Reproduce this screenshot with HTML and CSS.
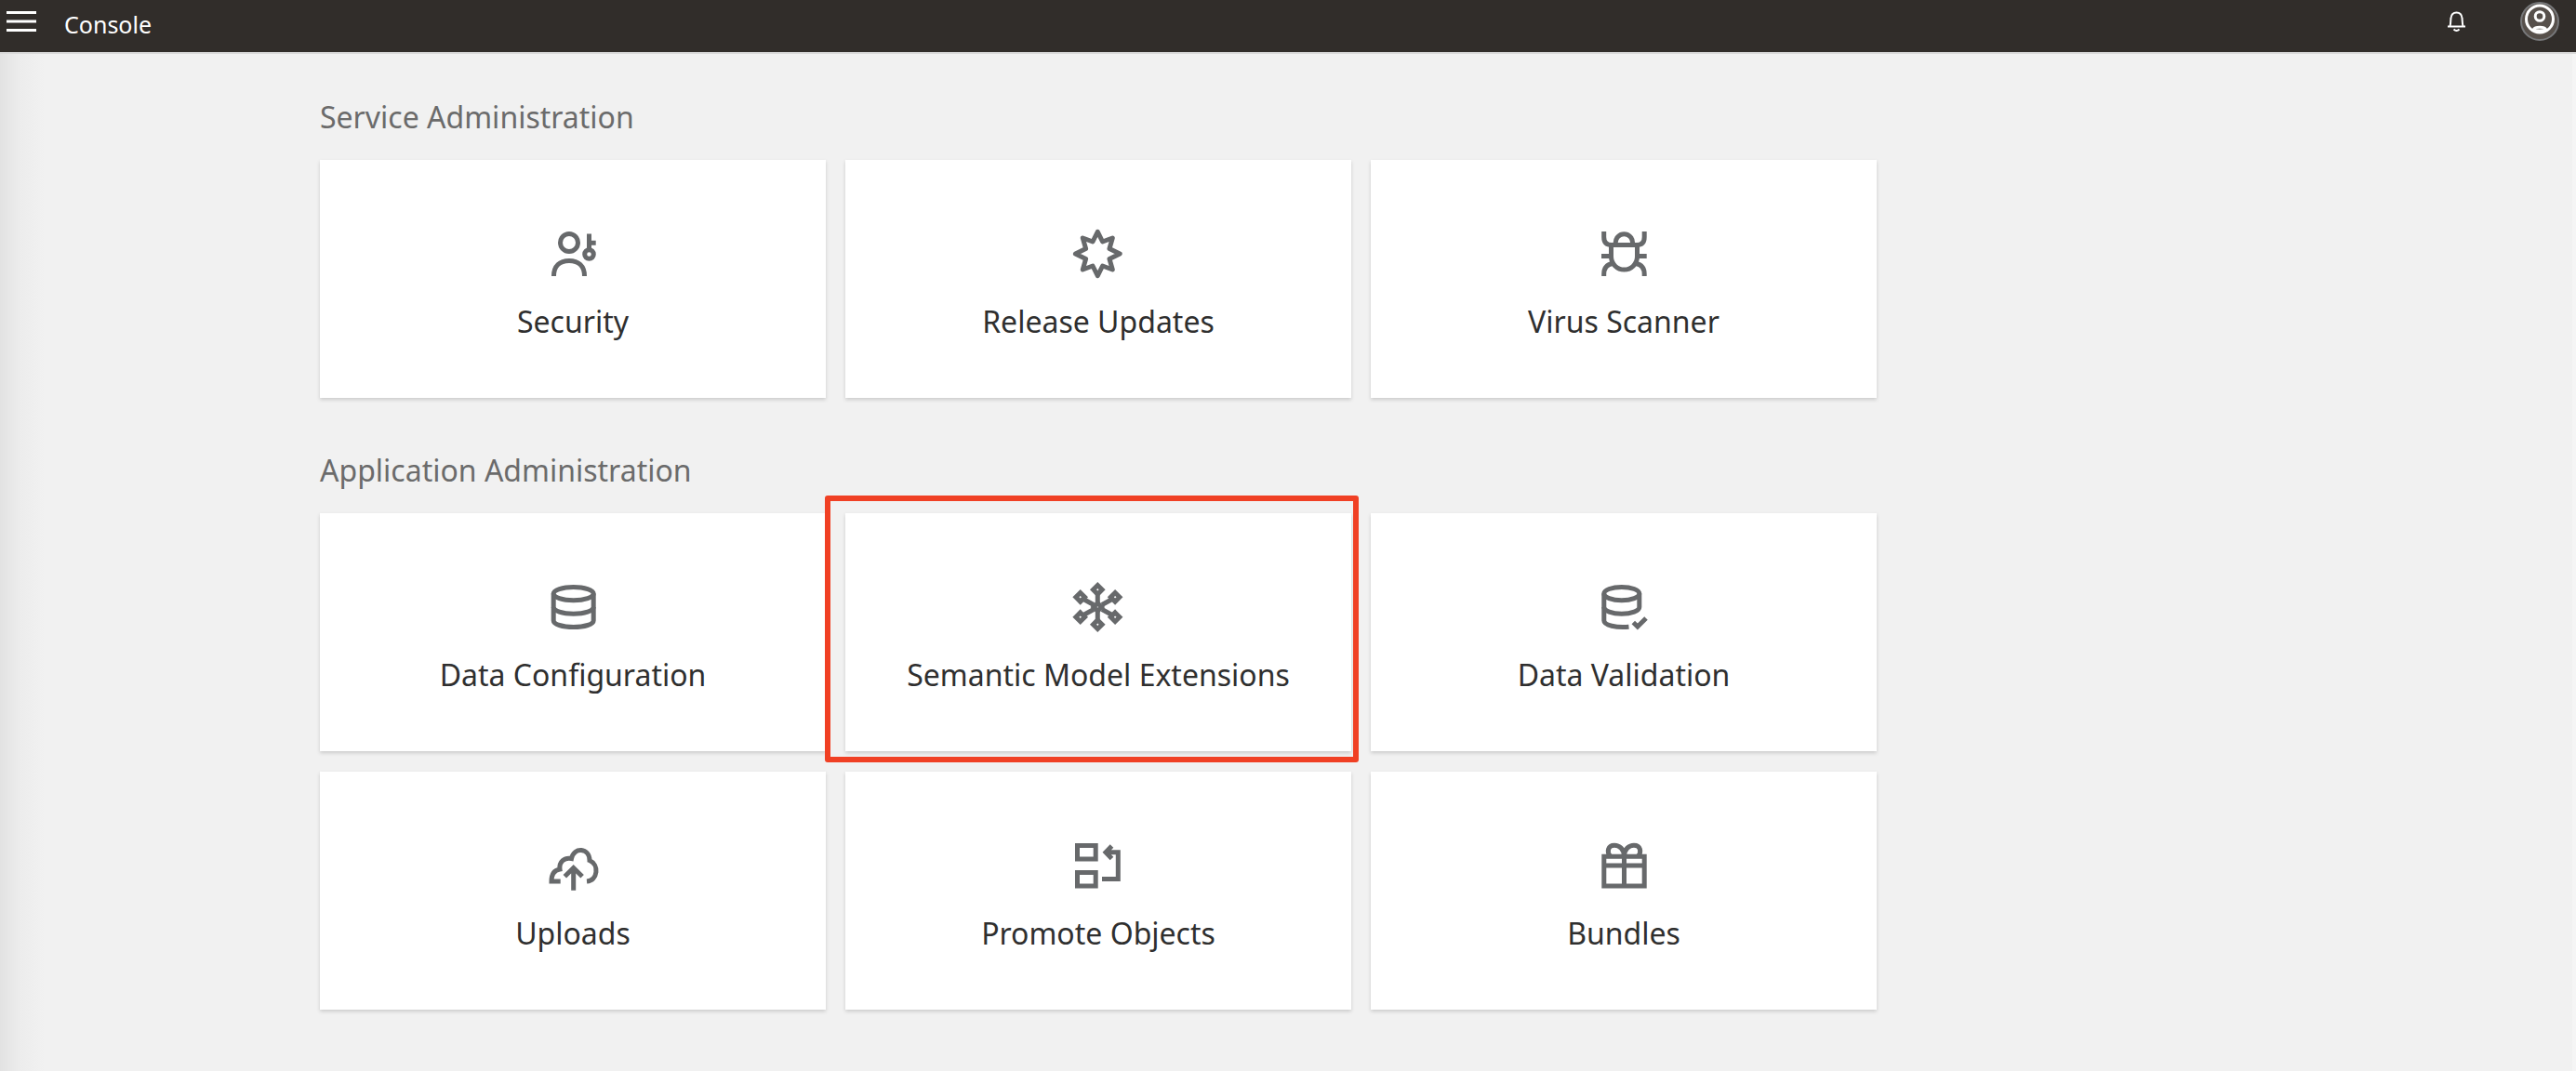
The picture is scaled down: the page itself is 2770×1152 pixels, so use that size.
FILE: index.html
```html
<!DOCTYPE html>
<html lang="en">
<head>
  <meta charset="UTF-8">
  <title>Console</title>
  <meta name="viewport" content="width=device-width, initial-scale=1.0">
  <link rel="stylesheet" href="styles.css">
</head>
<body>
  <header class="topbar">
    <button class="icon-button" type="button" aria-label="Navigation menu">
      <svg class="menu-icon" viewBox="0 0 32 24"><path d="M0 2.5H32M0 12H32M0 21.5H32"/></svg>
    </button>
    <span class="topbar-title">Console</span>
    <button class="icon-button push-right" type="button" aria-label="Notifications">
      <svg class="bell-icon" viewBox="0 0 24 24"><path d="M2 17.5H21M4.5 17C5.5 14 5 12 5.500 8.500C6 4 8.500 2.500 11.500 2.500S17 4 17.500 8.500C18 12 17.500 14 18.500 17M8.500 20.500Q11.500 23.500 14.500 20.500"/></svg>
    </button>
    <button class="icon-button" type="button" aria-label="My profile">
      <svg class="avatar-icon" viewBox="0 0 42 42">
        <circle class="avatar-back" cx="21" cy="21" r="20"/>
        <circle cx="21" cy="18.500" r="14.500"/>
        <circle cx="21" cy="15.500" r="4.800"/>
        <path d="M14.500 29.500C16 26.500 26 26.500 27.500 29.500C25 31.500 17 31.500 14.500 29.500Z"/>
      </svg>
    </button>
  </header>

  <main class="page">
    <section class="group">
      <h2>Service Administration</h2>
      <div class="cards">
        <a class="card" href="#security">
          <svg viewBox="0 0 60 60">
            <circle cx="26" cy="17" r="9.500"/>
            <path d="M9.500 53C9.500 42 16 36.500 26 36.500S42.500 42 42.500 53"/>
            <circle cx="47.500" cy="29.500" r="4.800"/>
            <path d="M47.500 25V7.500M47.500 17.300H54.700"/>
          </svg>
          <span>Security</span>
        </a>
        <a class="card" href="#release-updates">
          <svg class="rounded" viewBox="0 0 60 60">
            <path d="M29.300 5.300L34.600 16L45.300 12L42 23.500L53.200 29L42 34.500L45.300 46L34.600 42L29.300 52.700L24 42L13.300 46L16.600 34.500L5.400 29L16.600 23.500L13.300 12L24 16Z"/>
          </svg>
          <span>Release Updates</span>
        </a>
        <a class="card" href="#virus-scanner">
          <svg viewBox="0 0 60 60">
            <path d="M16.500 19.500H44.500V32A14 14 0 0 1 16.500 32Z"/>
            <path d="M21.200 19V17A9.200 9.200 0 0 1 39.600 17V19"/>
            <path d="M8.700 5V11Q8.700 19.500 17 19.500M52.200 5V11Q52.200 19.500 44 19.500"/>
            <path d="M6 31.500H16M45 31.500H54.700"/>
            <path d="M8.700 53V51Q8.700 41 18 39.500M52.200 53V51Q52.200 41 43 39.500"/>
          </svg>
          <span>Virus Scanner</span>
        </a>
      </div>
    </section>

    <section class="group">
      <h2>Application Administration</h2>
      <div class="cards">
        <a class="card" href="#data-configuration">
          <svg viewBox="0 0 60 60">
            <ellipse cx="30.700" cy="14.600" rx="21.500" ry="7.200"/>
            <path d="M9.200 14.600V43.500C9.200 47.500 18.800 50.500 30.700 50.500S52.200 47.500 52.200 43.500V14.600"/>
            <path d="M9.200 29C9.200 33 18.800 36.200 30.700 36.200S52.200 33 52.200 29"/>
          </svg>
          <span>Data Configuration</span>
        </a>
        <a class="card highlighted" href="#semantic-model-extensions">
          <svg viewBox="0 0 60 60">
            <path d="M29.300 15V24M29.300 34V43M15 21L25 26.500M34 31.500L44 37M15 37L25 31.500M34 26.500L44 21"/>
            <path d="M29.300 5.500L34.100 10.300L29.300 15.100L24.500 10.300ZM29.300 42.900L34.100 47.700L29.300 52.500L24.500 47.700ZM10.700 13.500L15.500 18.300L10.700 23.100L5.900 18.300ZM10.700 34.900L15.500 39.700L10.700 44.500L5.900 39.700ZM48.100 13.500L52.900 18.300L48.100 23.100L43.300 18.300ZM48.100 34.900L52.900 39.700L48.100 44.500L43.300 39.700Z"/>
            <path d="M29.300 24.700L33.600 29L29.300 33.300L25 29Z"/>
          </svg>
          <span>Semantic Model Extensions</span>
        </a>
        <a class="card" href="#data-validation">
          <svg viewBox="0 0 60 60">
            <ellipse cx="27.800" cy="14.600" rx="19" ry="7.200"/>
            <path d="M35.500 50.200C22 51.500 8.800 48.500 8.800 43.500V14.600"/>
            <path d="M8.800 29C8.800 33 17.300 36.200 27.800 36.200S46.800 33 46.800 29V14.600"/>
            <path d="M40.300 45.500L44.900 50L54 41"/>
          </svg>
          <span>Data Validation</span>
        </a>
        <a class="card" href="#uploads">
          <svg viewBox="0 0 60 60">
            <path d="M16.700 46H7C7 39 10 34 16 33C15 25 21 20 28.500 21.500C31 8.500 48 10 48 23.500C58.500 28 57 45 45 46"/>
            <path d="M30.700 55.700V31M21.300 40.700L30.700 31.500L40.100 40.700"/>
          </svg>
          <span>Uploads</span>
        </a>
        <a class="card" href="#promote-objects">
          <svg viewBox="0 0 60 60">
            <path d="M7.500 7.500H27.200V22H7.500ZM7.500 36.500H27.200V51H7.500Z"/>
            <path d="M34 43.500H51.300V14.700H39M44.500 8L38 14.700L44.500 21.500"/>
          </svg>
          <span>Promote Objects</span>
        </a>
        <a class="card" href="#bundles">
          <svg viewBox="0 0 60 60">
            <path d="M8.800 19.200H52.200V50.900H8.800ZM8.800 29H52.200M30.500 19V51"/>
            <path d="M30.500 19C30.500 11 25 7.200 20 7.200C13 7.200 11.500 14 15.500 19M30.500 19C30.500 11 36 7.200 41 7.200C48 7.200 49.500 14 45.500 19"/>
          </svg>
          <span>Bundles</span>
        </a>
      </div>
    </section>
  </main>
</body>
</html>
```
FILE: styles.css
```css
* {
  box-sizing: border-box;
}

body {
  margin: 0;
  min-height: 100vh;
  display: flex;
  flex-direction: column;
  font-family: "Noto Sans", "Open Sans", sans-serif;
  background-color: #f1f1f1;
}

.topbar {
  display: flex;
  align-items: center;
  height: 58px;
  padding: 0 18px 4px 7px;
  background-color: #312d2a;
  border-bottom: 2px solid #d9d9d9;
  color: #fff;
}

.topbar-title {
  margin-left: 30px;
  font-size: 25px;
}

.icon-button {
  display: flex;
  padding: 0 0 6px;
  border: none;
  background: none;
  cursor: pointer;
}

.icon-button svg {
  fill: none;
  stroke: #fff;
}

.push-right {
  margin-left: auto;
  margin-right: 56px;
}

.menu-icon {
  width: 32px;
  height: 24px;
  stroke-width: 3;
}

.bell-icon {
  width: 24px;
  height: 24px;
  stroke-width: 2;
}

.avatar-icon {
  width: 42px;
  height: 42px;
  stroke-width: 3;
}

.icon-button .avatar-back {
  fill: #57504b;
  stroke: #77787a;
  stroke-width: 2;
}

.page {
  flex: 1;
  padding: 46px 24px 48px 344px;
  background: linear-gradient(to right, #e2e2e2, #ececec 20px, #f1f1f1 48px);
  border-right: 4px solid #f5f5f5;
}

.group {
  max-width: 1674px;
}

.group + .group {
  margin-top: 56px;
}

h2 {
  margin: 0 0 24px;
  font-size: 32px;
  font-weight: 400;
  line-height: 44px;
  color: #6b6b6b;
}

.cards {
  display: grid;
  grid-template-columns: repeat(3, 1fr);
  gap: 22px 21px;
}

.card {
  position: relative;
  display: flex;
  flex-direction: column;
  align-items: center;
  gap: 20px;
  padding: 72px 20px 60px;
  background-color: #fff;
  box-shadow: 0 2px 4px rgba(0, 0, 0, 0.16);
  font-size: 32px;
  line-height: 44px;
  color: #2f2f2f;
  text-decoration: none;
}

.card svg {
  width: 60px;
  height: 60px;
  fill: none;
  stroke: #67696b;
  stroke-width: 5;
}

.card .rounded {
  stroke-linejoin: round;
}

/* red frame round the selected card */
.highlighted::after {
  content: "";
  position: absolute;
  inset: -19px -8px -12px -22px;
  border: 6px solid #f04024;
  border-radius: 3px;
}
```
